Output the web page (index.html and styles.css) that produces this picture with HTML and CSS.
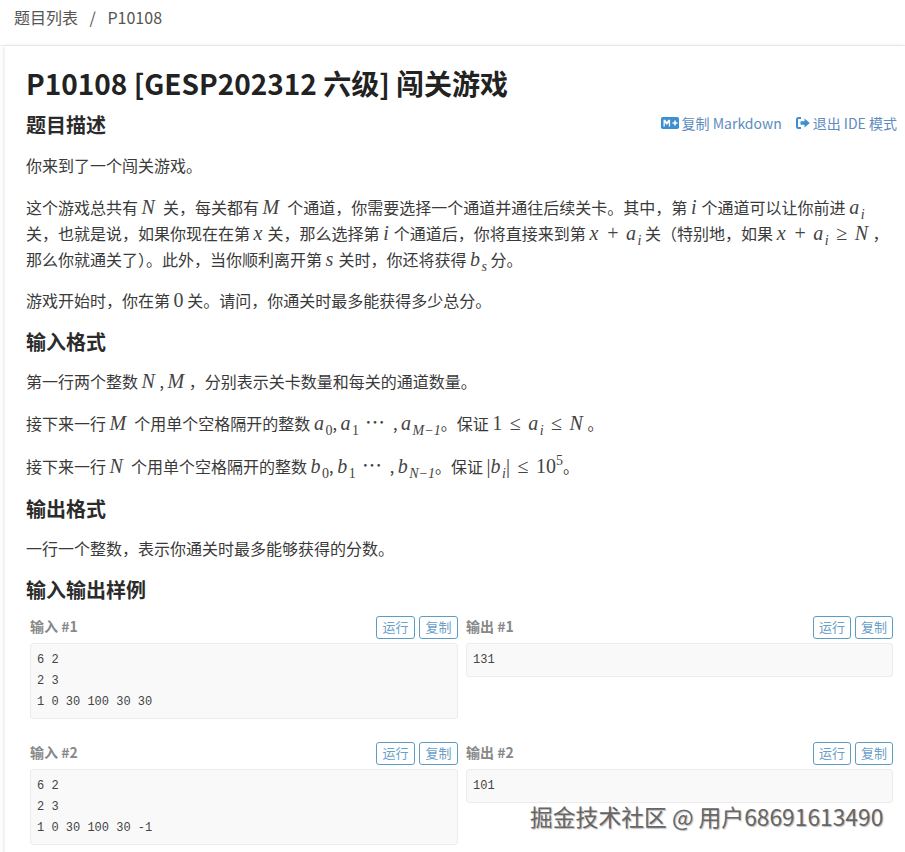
FILE: index.html
```html
<!DOCTYPE html>
<html lang="zh-CN">
<head>
    <meta charset="UTF-8">
    <meta name="viewport" content="width=device-width, initial-scale=1.0">
    <title>P10108 闯关游戏</title>
    <link rel="stylesheet" href="styles.css">
</head>
<body>
    <nav class="breadcrumb">
        <a>题目列表</a>
        <span class="sep">/</span>
        <span>P10108</span>
    </nav>
    <main class="card">
        <h1>P10108 [GESP202312 六级] 闯关游戏</h1>
        <div class="head-row">
            <h2>题目描述</h2>
            <div class="actions">
                <a class="action">
                    <svg class="icon-md" viewBox="0 0 18 12"><rect width="18" height="12" rx="1.8" fill="#3d8fd1"/><path d="M2.5 9.500V2.800h1.800l1.500 2.200 1.500-2.200h1.800v6.700H7.800V5.400L5.800 8 3.800 5.400v4.100z" fill="#fff"/><path d="M13.200 3.500h1.600v1.700h1.700v1.600h-1.700v1.700h-1.600V6.800h-1.700V5.200h1.700z" fill="#fff"/></svg>
                    复制 Markdown
                </a>
                <a class="action">
                    <svg class="icon-exit" viewBox="0 0 14 12"><path d="M5 1H2.500A1.500 1.500 0 0 0 1 2.500v7A1.500 1.500 0 0 0 2.500 11H5" fill="none" stroke="#3d8fd1" stroke-width="2"/><path d="M4.500 4.300h4V1.500L13.800 6 8.500 10.500V7.700h-4z" fill="#3d8fd1"/></svg>
                    退出 IDE 模式
                </a>
            </div>
        </div>
        <p>你来到了一个闯关游戏。</p>
        <p>这个游戏总共有 <i class="cap">N</i> 关，每关都有 <i class="cap">M</i> 个通道，你需要选择一个通道并通往后续关卡。其中，第 <i>i</i> 个通道可以让你前进 <i>a<sub>i</sub></i><br>关，也就是说，如果你现在在第 <i>x</i> 关，那么选择第 <i>i</i> 个通道后，你将直接来到第 <i>x</i><span class="op">+</span><i>a<sub>i</sub></i> 关（特别地，如果 <i>x</i><span class="op">+</span><i>a<sub>i</sub></i><span class="op">≥</span><i class="cap">N</i>，<br>那么你就通关了）。此外，当你顺利离开第 <i>s</i> 关时，你还将获得 <i>b<sub>s</sub></i> 分。</p>
        <p>游戏开始时，你在第 <span class="num">0</span> 关。请问，你通关时最多能获得多少总分。</p>

        <h2>输入格式</h2>
        <p>第一行两个整数 <i class="cap">N</i>, <i class="cap">M</i>，分别表示关卡数量和每关的通道数量。</p>
        <p class="math-line">接下来一行 <i class="cap">M</i> 个用单个空格隔开的整数 <i>a<sub class="num">0</sub></i>, <i>a<sub class="num">1</sub></i><span class="dots">⋯</span>, <i>a<sub>M−1</sub></i>。保证 <span class="num">1</span><span class="op">≤</span><i>a<sub>i</sub></i><span class="op">≤</span><i class="cap">N</i>。</p>
        <p class="math-line">接下来一行 <i class="cap">N</i> 个用单个空格隔开的整数 <i>b<sub class="num">0</sub></i>, <i>b<sub class="num">1</sub></i><span class="dots">⋯</span>, <i>b<sub>N−1</sub></i>。保证 <span class="num">|</span><i>b<sub>i</sub></i><span class="num">|</span><span class="op">≤</span><span class="num">10<sup>5</sup></span>。</p>

        <h2>输出格式</h2>
        <p>一行一个整数，表示你通关时最多能够获得的分数。</p>

        <h2>输入输出样例</h2>
        <div class="samples">
            <section class="sample">
                <div class="sample-head"><b>输入 #1</b><span class="btns"><button>运行</button><button>复制</button></span></div>
                <pre>6 2
2 3
1 0 30 100 30 30</pre>
            </section>
            <section class="sample">
                <div class="sample-head"><b>输出 #1</b><span class="btns"><button>运行</button><button>复制</button></span></div>
                <pre>131</pre>
            </section>
            <section class="sample">
                <div class="sample-head"><b>输入 #2</b><span class="btns"><button>运行</button><button>复制</button></span></div>
                <pre>6 2
2 3
1 0 30 100 30 -1</pre>
            </section>
            <section class="sample">
                <div class="sample-head"><b>输出 #2</b><span class="btns"><button>运行</button><button>复制</button></span></div>
                <pre>101</pre>
            </section>
        </div>
    </main>
    <div class="watermark">掘金技术社区 @ 用户68691613490</div>
</body>
</html>
```

FILE: styles.css
```css
body {
    font-family: "Noto Sans CJK SC", "Noto Sans", sans-serif;
    background-color: #fff;
    color: #3a3a3a;
    margin: 0;
    height: 852px;
    overflow: hidden;
    position: relative;
}
.breadcrumb {
    height: 46px;
    box-sizing: border-box;
    padding: 5px 14px 0;
    font-size: 16px;
    line-height: 24px;
    color: #555;
    border-bottom: 1px solid #eee;
}
.breadcrumb .sep {
    margin: 0 8px;
}
.card {
    margin-left: 5px;
    padding: 17px 12px 40px 21px;
    box-shadow: -1px 0 4px rgba(0, 0, 0, 0.1);
}
h1 {
    font-size: 28px;
    line-height: 40px;
    margin: 0;
    color: #222;
}
h2 {
    font-size: 20px;
    line-height: 28px;
    margin: 0;
    color: #2b2b2b;
}
.head-row {
    display: flex;
    justify-content: space-between;
    align-items: flex-start;
    margin-top: 8px;
}
.actions {
    display: flex;
    gap: 14px;
    font-size: 14px;
    line-height: 20px;
    color: #5d8cc0;
    margin: 2px -4px 0 0;
}
.action {
    display: flex;
    align-items: center;
    gap: 3px;
}
.icon-md {
    width: 18px;
    height: 12px;
}
.icon-exit {
    width: 14px;
    height: 12px;
}
p {
    font-size: 16px;
    line-height: 26px;
    margin: 0 0 15px;
}
.head-row + p {
    margin-top: 13px;
    margin-bottom: 16px;
}
h2 + p {
    margin-top: 12px;
}
.math-line {
    line-height: 28px;
}
i, .num, .op, .dots {
    font-family: "Liberation Serif", serif;
    font-size: 20px;
    line-height: 0;
    letter-spacing: 1.5px;
    color: #444;
}
i.cap {
    letter-spacing: 4.5px;
}
.num {
    letter-spacing: 0;
}
.op {
    margin: 0 7.5px;
    letter-spacing: 0;
}
.dots {
    margin: 0 8px 0 6px;
    letter-spacing: 0;
}
sub, sup, sub.num {
    font-size: 14px;
    line-height: 0;
    letter-spacing: 0;
}
sub.num {
    font-style: normal;
}
.samples {
    display: grid;
    grid-template-columns: 428px 427px;
    column-gap: 8px;
    row-gap: 22px;
    margin: 11px 0 0 4px;
}
.sample-head {
    display: flex;
    justify-content: space-between;
    align-items: center;
    height: 24px;
    margin-bottom: 4px;
    font-size: 14px;
    color: #888;
}
.sample-head b {
    padding-bottom: 3px;
}
.btns {
    display: flex;
    gap: 4px;
}
button {
    font-family: inherit;
    font-size: 13px;
    line-height: 20px;
    height: 23px;
    width: 39px;
    padding: 0;
    background-color: #fff;
    color: #6a9fc9;
    border: 1px solid #5d9dc4;
    border-radius: 3px;
}
.sample:nth-child(even) button {
    width: 38px;
}
pre {
    font-family: "Liberation Mono", monospace;
    font-size: 12px;
    line-height: 21px;
    color: #444;
    margin: 0;
    padding: 6px 6px 5px;
    min-height: 21px;
    background-color: #f9f9f9;
    border: 1px solid #ececec;
    border-radius: 3px;
}
.watermark {
    position: absolute;
    left: 530px;
    top: 802px;
    font-size: 22.8px;
    line-height: 30px;
    color: #666;
    text-shadow: 1px 1px 1px rgba(120, 120, 120, 0.5), -1px -1px 1px rgba(255, 255, 255, 0.8);
}
```
